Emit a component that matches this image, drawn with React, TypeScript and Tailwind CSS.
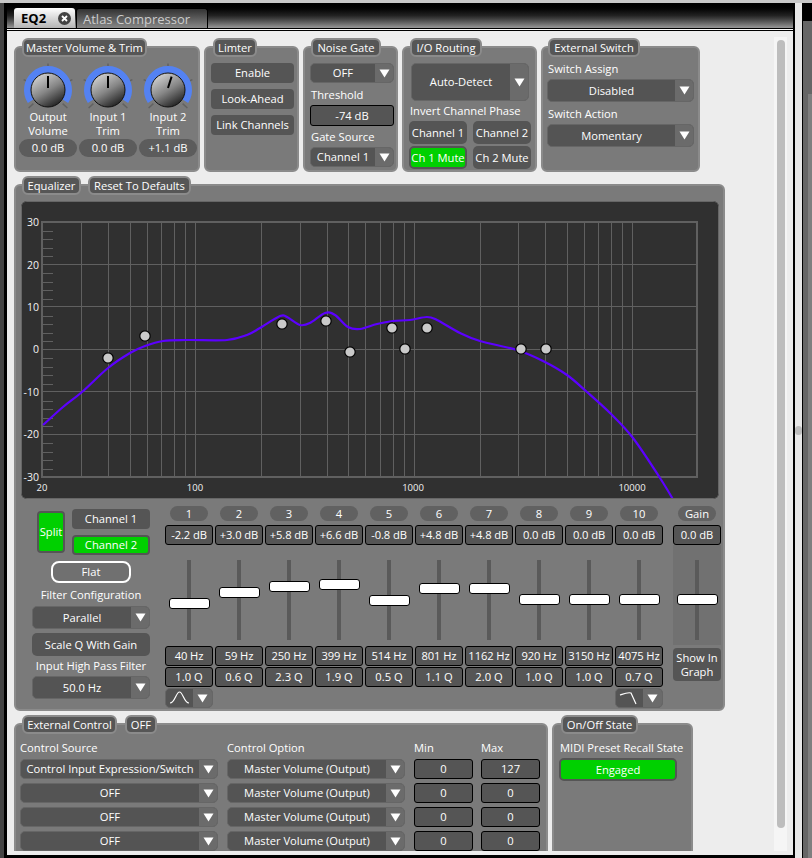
import type { ReactNode } from "react";

const BANDS = [
  { n: "1", db: "-2.2 dB", hz: "40 Hz", q: "1.0 Q", top: 38 },
  { n: "2", db: "+3.0 dB", hz: "59 Hz", q: "0.6 Q", top: 27 },
  { n: "3", db: "+5.8 dB", hz: "250 Hz", q: "2.3 Q", top: 21 },
  { n: "4", db: "+6.6 dB", hz: "399 Hz", q: "1.9 Q", top: 19 },
  { n: "5", db: "-0.8 dB", hz: "514 Hz", q: "0.5 Q", top: 35 },
  { n: "6", db: "+4.8 dB", hz: "801 Hz", q: "1.1 Q", top: 23 },
  { n: "7", db: "+4.8 dB", hz: "1162 Hz", q: "2.0 Q", top: 23 },
  { n: "8", db: "0.0 dB", hz: "920 Hz", q: "1.0 Q", top: 34 },
  { n: "9", db: "0.0 dB", hz: "3150 Hz", q: "1.0 Q", top: 34 },
  { n: "10", db: "0.0 dB", hz: "4075 Hz", q: "0.7 Q", top: 34 },
];

const CURVE: [number, number][] = [
  [43, 425], [63, 407], [82, 392], [108, 368], [130, 353], [145, 346], [163, 341], [187, 340],
  [227, 340], [247, 335], [260, 328], [280, 316], [287, 317], [300, 325], [310, 323], [325, 313],
  [335, 315], [348, 327], [360, 329], [377, 324], [393, 321], [410, 320], [427, 317], [437, 320],
  [460, 333], [480, 341], [517, 350], [543, 361], [567, 375], [587, 392], [610, 413], [633, 438],
  [660, 478], [674, 501],
];

const DOTS = [
  [108, 358], [145, 336], [282, 324], [326, 321], [350, 352],
  [392, 328], [405, 349], [427, 328], [521, 349], [546, 349],
];

const smooth = (pts: [number, number][]) => {
  let d = `M${pts[0][0]} ${pts[0][1]}`;
  for (let i = 0; i < pts.length - 1; i++) {
    const p0 = pts[Math.max(i - 1, 0)];
    const p1 = pts[i];
    const p2 = pts[i + 1];
    const p3 = pts[Math.min(i + 2, pts.length - 1)];
    const c1x = p1[0] + (p2[0] - p0[0]) / 6;
    const c1y = p1[1] + (p2[1] - p0[1]) / 6;
    const c2x = p2[0] - (p3[0] - p1[0]) / 6;
    const c2y = p2[1] - (p3[1] - p1[1]) / 6;
    d += ` C${c1x} ${c1y} ${c2x} ${c2y} ${p2[0]} ${p2[1]}`;
  }
  return d;
};

const freqX = (f: number) => Math.round(195.3 + 218.5 * (Math.log10(f) - 2)) + 0.5;
const FREQS = [
  30, 40, 50, 60, 70, 80, 90, 100, 200, 300, 400, 500, 600, 700, 800, 900, 1000,
  2000, 3000, 4000, 5000, 6000, 7000, 8000, 9000, 10000,
];

function Triangle() {
  return (
    <svg width="11" height="9" viewBox="0 0 11 9">
      <path d="M0.5 0.5H10.5L5.5 8.5Z" fill="#fff" />
    </svg>
  );
}

function Panel({ className, children }: { className: string; children: ReactNode }) {
  return (
    <div className={`relative shrink-0 rounded-md border-2 border-[#8b8b8b] bg-[#7a7a7a] ${className}`}>
      {children}
    </div>
  );
}

function Legend({ className, children }: { className: string; children: ReactNode }) {
  return (
    <div
      className={`absolute top-[-10px] flex h-[19px] items-center justify-center whitespace-nowrap rounded-md border-2 border-[#8b8b8b] bg-[#565656] text-white ${className}`}
    >
      {children}
    </div>
  );
}

function Dropdown({ className, label }: { className: string; label: string }) {
  return (
    <div className={`flex overflow-hidden rounded-[5px] border border-[#666] bg-[#545454] ${className}`}>
      <div className="flex min-w-0 flex-1 items-center justify-center whitespace-nowrap text-white">{label}</div>
      <div className="flex w-[18px] shrink-0 items-center justify-center bg-[#6b6b6b]">
        <Triangle />
      </div>
    </div>
  );
}

function Btn({ className, children }: { className: string; children: ReactNode }) {
  return (
    <div className={`flex items-center justify-center rounded-[4px] bg-[#555] whitespace-nowrap text-white ${className}`}>
      {children}
    </div>
  );
}

function Box({ className, children }: { className: string; children: ReactNode }) {
  return (
    <div className={`flex items-center justify-center rounded-[3px] border border-black bg-[#555] whitespace-nowrap text-white ${className}`}>
      {children}
    </div>
  );
}

function Knob({ id, tip }: { id: string; tip: [number, number] }) {
  const cx = 29;
  const cy = 28;
  const ticks = [-133, -67, 0, 67, 133];
  return (
    <svg width="58" height="48" viewBox="0 0 58 48" className="block">
      <defs>
        <linearGradient id={id} x1="0.2" y1="0" x2="0.8" y2="1">
          <stop offset="0" stopColor="#d8d8d8" />
          <stop offset="0.5" stopColor="#868686" />
          <stop offset="1" stopColor="#161616" />
        </linearGradient>
      </defs>
      {ticks.map((t) => (
        <line
          key={t}
          x1={cx + 20 * Math.sin((t * Math.PI) / 180)}
          y1={cy - 20 * Math.cos((t * Math.PI) / 180)}
          x2={cx + 26.5 * Math.sin((t * Math.PI) / 180)}
          y2={cy - 26.5 * Math.cos((t * Math.PI) / 180)}
          stroke="#626262"
          strokeWidth="1.5"
        />
      ))}
      <path
        d={`M${cx - 17.2} ${cy + 11.2} A20.5 20.5 0 1 1 ${cx + 17.2} ${cy + 11.2}`}
        fill="none"
        stroke="#5482f2"
        strokeWidth="7"
      />
      <circle cx={cx} cy={cy} r="17" fill={`url(#${id})`} stroke="#111" strokeWidth="1" />
      <line x1={cx + tip[0]} y1={cy + tip[1]} x2={cx} y2={cy - 2} stroke="#000" strokeWidth="2" />
    </svg>
  );
}

function Graph() {
  return (
    <svg width="698" height="298" viewBox="21 201 698 298" className="block rounded-md bg-[#303030]">
      {FREQS.map((f) => (
        <line key={f} x1={freqX(f)} y1="222" x2={freqX(f)} y2="477" stroke="#606060" strokeWidth="1" />
      ))}
      {[264.5, 306.5, 349.5, 391.5, 434.5].map((y) => (
        <line key={y} x1="42" y1={y} x2="697" y2={y} stroke="#606060" strokeWidth="1" />
      ))}
      {Array.from({ length: 30 }, (_, i) => i)
        .filter((i) => i % 5 !== 0)
        .map((i) => (
          <line
            key={i}
            x1="42"
            y1={Math.round(222 + i * 8.5) + 0.5}
            x2="53"
            y2={Math.round(222 + i * 8.5) + 0.5}
            stroke="#606060"
            strokeWidth="1"
          />
        ))}
      <rect x="42" y="222" width="655" height="255" fill="none" stroke="#606060" strokeWidth="2" />
      {[
        ["30", 222], ["20", 264.5], ["10", 306.5], ["0", 349], ["-10", 391.5], ["-20", 434], ["-30", 477],
      ].map(([t, y]) => (
        <text key={t} x="39" y={Number(y) + 4} textAnchor="end" fontSize="10.5" fontWeight="500" fill="#f2f2f2">
          {t}
        </text>
      ))}
      {[
        ["20", 42], ["100", 195], ["1000", 413], ["10000", 632],
      ].map(([t, x]) => (
        <text key={t} x={x} y="491" textAnchor="middle" fontSize="9.5" fontWeight="500" fill="#f2f2f2">
          {t}
        </text>
      ))}
      <path d={smooth(CURVE)} fill="none" stroke="#5c00ff" strokeWidth="2.2" />
      {DOTS.map(([x, y]) => (
        <circle key={x} cx={x} cy={y} r="5.2" fill="#c9c9c9" stroke="#000" strokeWidth="1.2" />
      ))}
      <rect x="21.5" y="201.5" width="697" height="297" rx="4" fill="none" stroke="#666" />
    </svg>
  );
}

function Slider({ top }: { top: number }) {
  return (
    <div className="relative mx-auto h-[80px] w-[41px]">
      <div className="mx-auto h-full w-[4px] bg-[#5a5a5a]" />
      <div
        className="absolute left-0 h-[11px] w-[41px] rounded-[3px] border border-black bg-white"
        style={{ top }}
      />
    </div>
  );
}

function Pill({ children }: { children: ReactNode }) {
  return (
    <div className="mx-auto flex h-[15px] w-[38px] items-center justify-center rounded-full bg-[#616161] text-white">
      {children}
    </div>
  );
}

function FilterPick({ path }: { path: string }) {
  return (
    <div className="flex h-[20px] w-[48px] overflow-hidden rounded-[5px] border border-[#666] bg-[#545454]">
      <div className="flex flex-1 items-center justify-center">
        <svg width="22" height="16" viewBox="0 0 22 16">
          <path d={path} fill="none" stroke="#fff" strokeWidth="1.2" />
        </svg>
      </div>
      <div className="flex w-[19px] items-center justify-center bg-[#6b6b6b]">
        <Triangle />
      </div>
    </div>
  );
}

const SOURCES = ["Control Input Expression/Switch", "OFF", "OFF", "OFF"];
const MAXES = ["127", "0", "0", "0"];

export default function App() {
  return (
    <div className="flex h-[858px] w-[812px] flex-col overflow-hidden bg-[#ededed] font-['Open_Sans',sans-serif] text-[11.2px] leading-[14px]">
      <div className="h-[3px] shrink-0 bg-[#c8c8c8]" />
      <div className="flex min-h-0 flex-1">
        {/* left edge */}
        <div className="w-[4px] shrink-0 bg-[#444]" />
        <div className="w-[3px] shrink-0 bg-black" />

        <div className="flex w-[786px] shrink-0 flex-col">
          {/* Tab bar */}
          <div className="flex h-[25px] shrink-0 items-end bg-gradient-to-b from-black via-[#222] to-[#999] pl-[7px]">
            <div className="flex h-[20px] w-[61px] items-center justify-between rounded-t-[3px] bg-gradient-to-b from-white to-[#b5b5b5] pl-[7px] pr-[4px]">
              <span className="text-[13px] font-bold text-black">EQ2</span>
              <svg width="13" height="13" viewBox="0 0 13 13">
                <circle cx="6.5" cy="6.5" r="6.5" fill="#444" />
                <path d="M4 4L9 9M9 4L4 9" stroke="#fff" strokeWidth="1.8" />
              </svg>
            </div>
            <div className="ml-[1px] flex h-[20px] w-[132px] items-center rounded-t-[3px] border border-b-0 border-black bg-gradient-to-b from-[#333] to-[#888] pl-[6px] text-[13px] text-[#ccc]">
              Atlas Compressor
            </div>
          </div>
          <div className="h-[1px] shrink-0 bg-black" />
          <div className="h-[2px] shrink-0 border-b border-black bg-white" />

          <div className="flex min-h-0 flex-1 flex-col">
            <div className="flex min-h-0 flex-1">
              {/* Scrolling content */}
              <div className="w-[767px] shrink-0 overflow-hidden pl-[7px] pt-[15px]">
                <div className="flex gap-[4px]">
                  <Panel className="h-[126px] w-[186px]">
                    <Legend className="left-[6px] w-[125px]">Master Volume &amp; Trim</Legend>
                    <div className="flex gap-[2px] pl-[3px] pt-[14px]">
                      {[
                        { id: "k1", a: "Output", b: "Volume", v: "0.0 dB", tip: [0, -14] as [number, number] },
                        { id: "k2", a: "Input 1", b: "Trim", v: "0.0 dB", tip: [0, -14] as [number, number] },
                        { id: "k3", a: "Input 2", b: "Trim", v: "+1.1 dB", tip: [3.6, -13.4] as [number, number] },
                      ].map((k) => (
                        <div key={k.id} className="flex w-[58px] flex-col items-center text-white">
                          <Knob id={k.id} tip={k.tip} />
                          <div>{k.a}</div>
                          <div>{k.b}</div>
                          <div className="mt-[1px] flex h-[18px] w-[58px] items-center justify-center rounded-[9px] bg-[#5c5c5c]">
                            {k.v}
                          </div>
                        </div>
                      ))}
                    </div>
                  </Panel>

                  <Panel className="h-[126px] w-[95px]">
                    <Legend className="left-[7px] w-[44px]">Limter</Legend>
                    <div className="flex flex-col gap-[6px] pl-[5px] pr-[3px] pt-[15px]">
                      <Btn className="h-[20px]">Enable</Btn>
                      <Btn className="h-[20px]">Look-Ahead</Btn>
                      <Btn className="h-[20px]">Link Channels</Btn>
                    </div>
                  </Panel>

                  <Panel className="h-[126px] w-[95px]">
                    <Legend className="left-[6px] w-[70px]">Noise Gate</Legend>
                    <div className="pl-[5px] pr-[2px] pt-[15px] text-white">
                      <Dropdown className="h-[20px]" label="OFF" />
                      <div className="mt-[5px] h-[17px] pl-[1px] leading-[14px]">Threshold</div>
                      <Box className="h-[21px]">-74 dB</Box>
                      <div className="mt-[4px] h-[17px] pl-[1px]">Gate Source</div>
                      <Dropdown className="h-[20px]" label="Channel 1" />
                    </div>
                  </Panel>

                  <Panel className="h-[126px] w-[135px]">
                    <Legend className="left-[6px] w-[72px]">I/O Routing</Legend>
                    <div className="px-[5px] pt-[15px] text-white">
                      <Dropdown className="ml-[2px] h-[38px] w-[118px]" label="Auto-Detect" />
                      <div className="mt-[3px] h-[17px] pl-[1px]">Invert Channel Phase</div>
                      <div className="grid grid-cols-[58px_58px] gap-x-[6px] gap-y-[2px]">
                        <Btn className="h-[23px] rounded-[5px]">Channel 1</Btn>
                        <Btn className="h-[23px] rounded-[5px]">Channel 2</Btn>
                        <div className="flex h-[23px] items-center justify-center rounded-[5px] border-2 border-[#555] bg-[#00d000] whitespace-nowrap">
                          Ch 1 Mute
                        </div>
                        <Btn className="h-[23px] rounded-[5px]">Ch 2 Mute</Btn>
                      </div>
                    </div>
                  </Panel>

                  <Panel className="h-[126px] w-[159px]">
                    <Legend className="left-[5px] w-[92px]">External Switch</Legend>
                    <div className="px-[4px] pt-[14px] text-white">
                      <div className="h-[17px] pl-[1px]">Switch Assign</div>
                      <Dropdown className="h-[23px]" label="Disabled" />
                      <div className="mt-[5px] h-[17px] pl-[1px]">Switch Action</div>
                      <Dropdown className="h-[23px]" label="Momentary" />
                    </div>
                  </Panel>
                </div>

                {/* Equalizer */}
                <Panel className="mt-[12px] h-[527px] w-[711px]">
                  <Legend className="left-[6px] w-[59px]">Equalizer</Legend>
                  <Legend className="left-[72px] w-[103px]">Reset To Defaults</Legend>
                  <div className="px-[5px] pt-[15px]">
                    <Graph />
                    <div className="flex pl-[11px] text-white">
                      <div className="w-[118px] shrink-0 pt-[10px]">
                        <div className="flex pl-[5px]">
                          <div className="mt-[2px] flex h-[42px] w-[28px] items-center justify-center rounded-[4px] border-2 border-[#555] bg-[#00d000]">
                            Split
                          </div>
                          <div className="ml-[7px] flex w-[78px] flex-col gap-[6px]">
                            <Btn className="h-[20px]">Channel 1</Btn>
                            <div className="flex h-[20px] items-center justify-center rounded-[4px] border-2 border-[#555] bg-[#00d000]">
                              Channel 2
                            </div>
                          </div>
                        </div>
                        <div className="mx-auto mt-[6px] flex h-[22px] w-[80px] items-center justify-center rounded-[8px] border-2 border-white bg-[#707070]">
                          Flat
                        </div>
                        <div className="flex h-[23px] items-center justify-center whitespace-nowrap">Filter Configuration</div>
                        <Dropdown className="h-[23px]" label="Parallel" />
                        <Btn className="mt-[4px] h-[23px] rounded-[5px]">Scale Q With Gain</Btn>
                        <div className="flex h-[20px] items-center justify-center whitespace-nowrap">Input High Pass Filter</div>
                        <Dropdown className="h-[23px]" label="50.0 Hz" />
                      </div>

                      <div className="ml-[15px] flex">
                        {BANDS.map((b) => (
                          <div key={b.n} className="mr-[2px] w-[48px] pt-[7px]">
                            <Pill>{b.n}</Pill>
                            <Box className="mt-[4px] h-[20px] tracking-[-0.1px]">{b.db}</Box>
                            <div className="h-[101px] pt-[15px]">
                              <Slider top={b.top} />
                            </div>
                            <Box className="h-[20px] tracking-[-0.1px]">{b.hz}</Box>
                            <Box className="mt-[1px] h-[20px]">{b.q}</Box>
                            <div className="mt-[1px] h-[20px]">
                              {b.n === "1" && <FilterPick path="M1 13C6 13 7 2 10.5 2C14 2 15 13 20 13" />}
                              {b.n === "10" && <FilterPick path="M1 5C4 4 9 2 12 3L17 14" />}
                            </div>
                          </div>
                        ))}
                      </div>

                      <div className="ml-[8px] w-[50px] pt-[7px]">
                        <Pill>Gain</Pill>
                        <Box className="mx-auto mt-[4px] h-[20px] w-[48px]">0.0 dB</Box>
                        <div className="h-[100px] bg-[#717171] pt-[15px]">
                          <Slider top={34} />
                        </div>
                        <Btn className="mx-auto mt-[3px] h-[33px] w-[48px]">
                          <span className="text-center">
                            Show In
                            <br />
                            Graph
                          </span>
                        </Btn>
                      </div>
                    </div>
                  </div>
                </Panel>

                <div className="mt-[12px] flex gap-[4px]">
                  <Panel className="h-[140px] w-[534px]">
                    <Legend className="left-[6px] w-[95px]">External Control</Legend>
                    <Legend className="left-[109px] w-[32px]">OFF</Legend>
                    <div className="pl-[4px] pt-[16px] text-white">
                      <div className="flex h-[18px] gap-[9px]">
                        <div className="w-[198px]">Control Source</div>
                        <div className="w-[178px]">Control Option</div>
                        <div className="w-[59px]">Min</div>
                        <div className="-ml-[1px] w-[59px]">Max</div>
                      </div>
                      <div className="flex flex-col gap-[4px]">
                        {SOURCES.map((s, i) => (
                          <div key={i} className="flex gap-[9px]">
                            <Dropdown className="h-[20px] w-[198px]" label={s} />
                            <Dropdown className="h-[20px] w-[178px]" label="Master Volume (Output)" />
                            <Box className="h-[20px] w-[59px]">0</Box>
                            <Box className="-ml-[1px] h-[20px] w-[59px]">{MAXES[i]}</Box>
                          </div>
                        ))}
                      </div>
                    </div>
                  </Panel>

                  <Panel className="h-[140px] w-[141px]">
                    <Legend className="left-[7px] w-[77px]">On/Off State</Legend>
                    <div className="px-[5px] pt-[16px] text-white">
                      <div className="h-[17px] whitespace-nowrap pl-[1px]">MIDI Preset Recall State</div>
                      <div className="flex h-[23px] w-[118px] items-center justify-center rounded-[5px] border-2 border-[#555] bg-[#00d000]">
                        Engaged
                      </div>
                    </div>
                  </Panel>
                </div>
              </div>

              {/* Scrollbar */}
              <div className="w-[13px] shrink-0 pt-[6px]">
                <div className="h-full bg-[#f5f5f5] px-[3px] pt-[3px]">
                  <div className="h-[788px] w-[8px] rounded-full bg-[#bdbdbd]" />
                </div>
              </div>
            </div>
            <div className="h-[4px] shrink-0" />
            <div className="h-[3px] shrink-0 bg-black" />
          </div>
        </div>

        {/* right edge */}
        <div className="w-[2px] shrink-0 bg-black" />
        <div className="flex w-[7px] shrink-0 flex-col items-center justify-center bg-[#e8e8e8]">
          <div className="h-[9px] w-[7px] rounded-full bg-[#bcbcbc]" />
        </div>
        <div className="w-[1px] shrink-0 bg-black" />
        <div className="flex w-[9px] shrink-0 flex-col">
          <div className="h-[18px] bg-black" />
          <div className="h-[73px] bg-[#666]" />
          <div className="flex flex-1">
            <div className="w-[5px] bg-[#666]" />
            <div className="flex-1 bg-[#7f7f7f]" />
          </div>
        </div>
      </div>
    </div>
  );
}
